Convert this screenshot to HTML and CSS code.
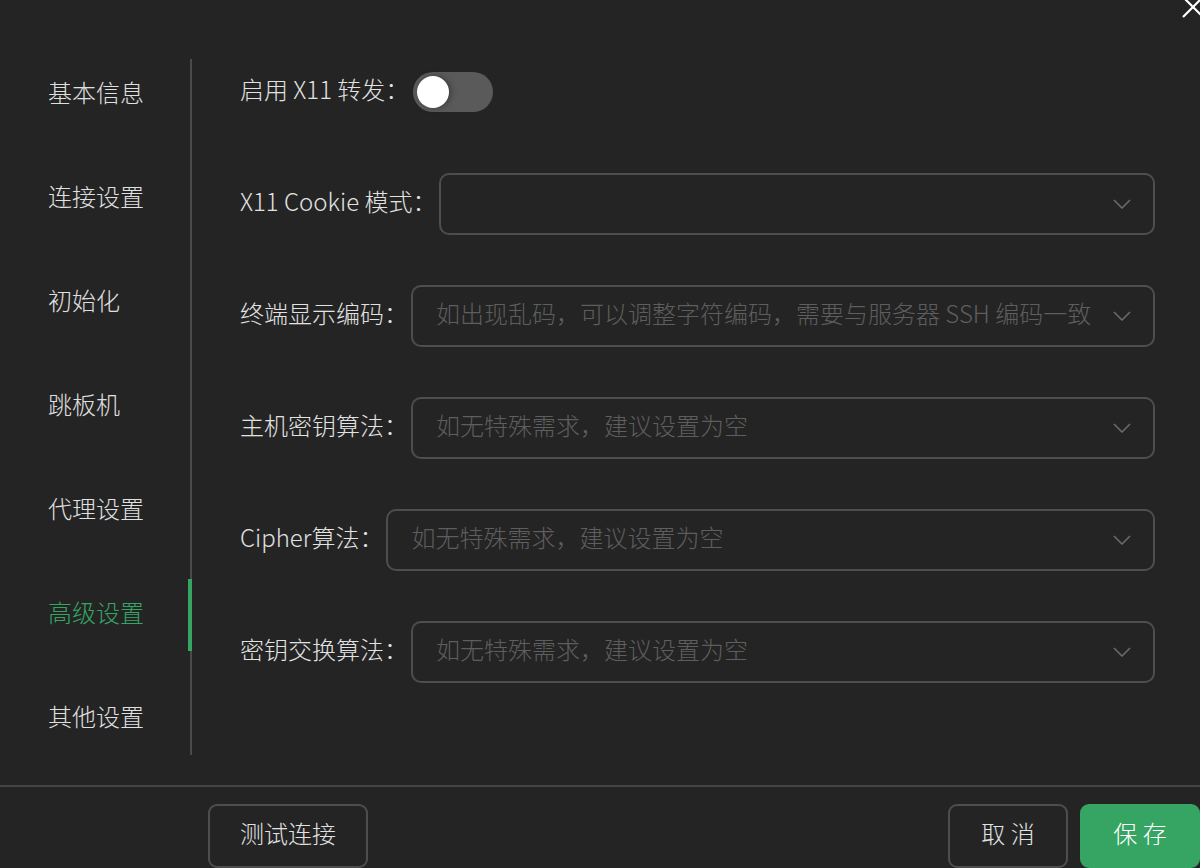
FILE: index.html
```html
<!DOCTYPE html>
<html lang="zh-CN">
<head>
<meta charset="utf-8">
<link rel="stylesheet" href="styles.css">
</head>
<body>
<div class="dialog">
  <svg class="close" width="30" height="30" viewBox="0 0 30 30"><path d="M2 0 L22 20 M2 20 L22 0" stroke="#ffffff" stroke-width="2.2" fill="none"/></svg>
  <div class="main">
    <nav class="sidebar">
      <div class="nav-item"><span class="txt">基本信息</span></div>
      <div class="nav-item"><span class="txt">连接设置</span></div>
      <div class="nav-item"><span class="txt">初始化</span></div>
      <div class="nav-item"><span class="txt">跳板机</span></div>
      <div class="nav-item"><span class="txt">代理设置</span></div>
      <div class="nav-item active"><span class="txt">高级设置</span></div>
      <div class="nav-item"><span class="txt">其他设置</span></div>
    </nav>
    <div class="form">
      <div class="row">
        <label class="label">启用 X11 转发：</label>
        <div class="switch"><div class="knob"></div></div>
      </div>
      <div class="row">
        <label class="label">X11 Cookie 模式：</label>
        <div class="select"><span class="placeholder"></span><svg class="chev" width="18" height="10" viewBox="0 0 18 10"><path d="M1 1 L9 9 L17 1" stroke="#6a6a6a" stroke-width="1.6" fill="none"/></svg></div>
      </div>
      <div class="row">
        <label class="label">终端显示编码：</label>
        <div class="select"><span class="placeholder">如出现乱码，可以调整字符编码，需要与服务器 SSH 编码一致</span><svg class="chev" width="18" height="10" viewBox="0 0 18 10"><path d="M1 1 L9 9 L17 1" stroke="#6a6a6a" stroke-width="1.6" fill="none"/></svg></div>
      </div>
      <div class="row">
        <label class="label">主机密钥算法：</label>
        <div class="select"><span class="placeholder">如无特殊需求，建议设置为空</span><svg class="chev" width="18" height="10" viewBox="0 0 18 10"><path d="M1 1 L9 9 L17 1" stroke="#6a6a6a" stroke-width="1.6" fill="none"/></svg></div>
      </div>
      <div class="row">
        <label class="label">Cipher算法：</label>
        <div class="select"><span class="placeholder">如无特殊需求，建议设置为空</span><svg class="chev" width="18" height="10" viewBox="0 0 18 10"><path d="M1 1 L9 9 L17 1" stroke="#6a6a6a" stroke-width="1.6" fill="none"/></svg></div>
      </div>
      <div class="row">
        <label class="label">密钥交换算法：</label>
        <div class="select"><span class="placeholder">如无特殊需求，建议设置为空</span><svg class="chev" width="18" height="10" viewBox="0 0 18 10"><path d="M1 1 L9 9 L17 1" stroke="#6a6a6a" stroke-width="1.6" fill="none"/></svg></div>
      </div>
    </div>
  </div>
  <div class="footer">
    <button class="btn test"><span class="txt">测试连接</span></button>
    <div class="spacer"></div>
    <button class="btn cancel"><span class="txt">取 消</span></button>
    <button class="btn save"><span class="txt">保 存</span></button>
  </div>
</div>
</body>
</html>
```

FILE: styles.css
```css
* { box-sizing: border-box; }
html, body {
  margin: 0;
  padding: 0;
  background: #242424;
  width: 1200px;
  height: 868px;
  overflow: hidden;
  font-family: "Noto Sans CJK SC", "Noto Sans", sans-serif;
  font-weight: 300;
  color: #e2e2e2;
}
.dialog {
  position: relative;
  width: 1200px;
  height: 868px;
  display: flex;
  flex-direction: column;
}
.close {
  position: absolute;
  left: 1181px;
  top: -3px;
}
.main {
  height: 787px;
  display: flex;
  align-items: flex-start;
  border-bottom: 2px solid #444;
}
.sidebar {
  margin-top: 59px;
  width: 192px;
  border-right: 2px solid #4a4a4a;
  display: flex;
  flex-direction: column;
  gap: 32px;
}
.nav-item {
  position: relative;
  height: 72px;
  display: flex;
  align-items: center;
  padding-left: 48px;
  font-size: 24px;
  color: #e0e0e0;
}
.txt {
  line-height: 1.4;
  margin-bottom: 6px;
}
.nav-item.active {
  color: #36a564;
}
.nav-item.active::after {
  content: "";
  position: absolute;
  right: -2px;
  top: 0;
  width: 4px;
  height: 72px;
  background: #36a564;
}
.form {
  flex: 1;
  margin-top: 61px;
  padding-left: 48px;
  padding-right: 45px;
  display: flex;
  flex-direction: column;
  gap: 50px;
}
.row {
  height: 62px;
  display: flex;
  align-items: center;
}
.label {
  font-size: 24px;
  line-height: 1.4;
  margin-bottom: 6px;
  color: #e2e2e2;
  white-space: nowrap;
  margin-right: 3px;
}
.switch {
  width: 80px;
  height: 40px;
  border-radius: 20px;
  background: #5a5a5a;
  position: relative;
  margin-left: 1px;
}
.knob {
  position: absolute;
  left: 4px;
  top: 4px;
  width: 32px;
  height: 32px;
  border-radius: 50%;
  background: #ffffff;
  box-shadow: 2px 0 6px rgba(0,0,0,0.35);
}
.select {
  flex: 1;
  height: 62px;
  border: 2px solid #4e4e4e;
  border-radius: 10px;
  display: flex;
  align-items: center;
  padding: 0 22px 0 23px;
  min-width: 0;
}
.placeholder {
  flex: 1;
  font-size: 24px;
  line-height: 1.4;
  margin-bottom: 6px;
  color: #5e5e5e;
  white-space: nowrap;
}
.chev {
  flex: none;
  margin-left: 12px;
}
.footer {
  flex: 1;
  display: flex;
  align-items: flex-start;
  padding: 17px 0 0 208px;
}
.spacer { flex: 1; }
.btn {
  height: 64px;
  border-radius: 9px;
  font-family: "Noto Sans CJK SC", "Noto Sans", sans-serif;
  font-weight: 300;
  font-size: 24px;
  color: #e2e2e2;
  background: #242424;
  border: 2px solid #4e4e4e;
  padding: 0;
  display: flex;
  align-items: center;
  justify-content: center;
}
.test { width: 160px; }
.cancel { width: 120px; margin-right: 12px; }
.save {
  width: 120px;
  background: #36a564;
  border-color: #36a564;
  color: #ffffff;
}
```
